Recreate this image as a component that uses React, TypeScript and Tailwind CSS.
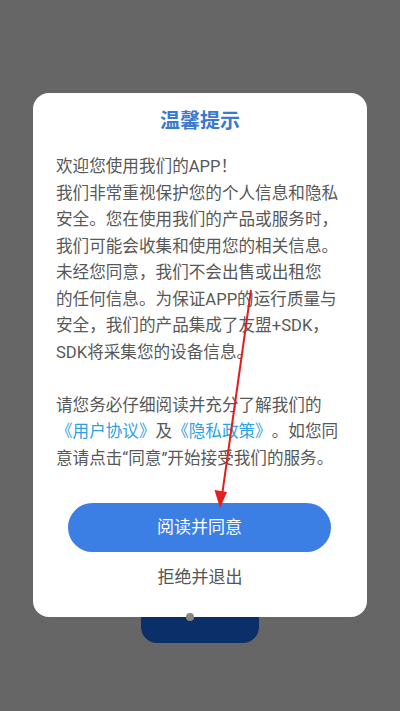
export default function App() {
    return (
        <div
            className="relative w-[400px] h-[711px] overflow-hidden bg-[#666666] [text-spacing-trim:space-all]"
            style={{ fontFamily: 'Roboto, "Noto Sans CJK SC", sans-serif' }}
        >
            <div className="pt-[93px] px-[33px]">
                {/* Dialog */}
                <div className="bg-white rounded-[16px] px-[23px] pt-[14px] pb-[27px]">
                    <h2 className="text-center text-[20px] leading-[28px] font-bold text-[#3b78d0]">温馨提示</h2>
                    <div className="mt-[19px] text-[16.6px] leading-[26.5px] text-[#585858] whitespace-nowrap">
                        <p>欢迎您使用我们的APP！</p>
                        <p>我们非常重视保护您的个人信息和隐私</p>
                        <p>安全。您在使用我们的产品或服务时，</p>
                        <p>我们可能会收集和使用您的相关信息。</p>
                        <p>未经您同意，我们不会出售或出租您</p>
                        <p>的任何信息。为保证APP的运行质量与</p>
                        <p>安全，我们的产品集成了友盟+SDK，</p>
                        <p>SDK将采集您的设备信息。</p>
                        <p>&nbsp;</p>
                        <p>请您务必仔细阅读并充分了解我们的</p>
                        <p>
                            <span className="text-[#2f9fe6]">《用户协议》</span>及
                            <span className="text-[#2f9fe6]">《隐私政策》</span>。如您同
                        </p>
                        <p>意请点击“同意”开始接受我们的服务。</p>
                    </div>
                    <button className="mt-[31px] ml-[12px] w-[263px] h-[49px] rounded-full bg-[#3b7ee4] text-white text-[17px]">
                        阅读并同意
                    </button>
                    <p className="mt-[12px] text-center text-[17px] leading-[26px] text-[#555555]">拒绝并退出</p>
                </div>

                {/* blue tab peeking from behind */}
                <div className="relative ml-[108px] w-[118px] h-[26px] bg-[#0b3069] rounded-b-[16px]">
                    <div className="absolute left-[45px] -top-[4px] w-[8px] h-[8px] rounded-full bg-[#8c877e]" />
                </div>
            </div>

            {/* red annotation arrow */}
            <svg className="absolute inset-0" width="400" height="711" viewBox="0 0 400 711">
                <line x1="251" y1="290" x2="222.5" y2="492" stroke="#e41e1e" strokeWidth="2" />
                <polygon points="220,508 214.5,490 227,492" fill="#e41e1e" />
            </svg>
        </div>
    );
}
